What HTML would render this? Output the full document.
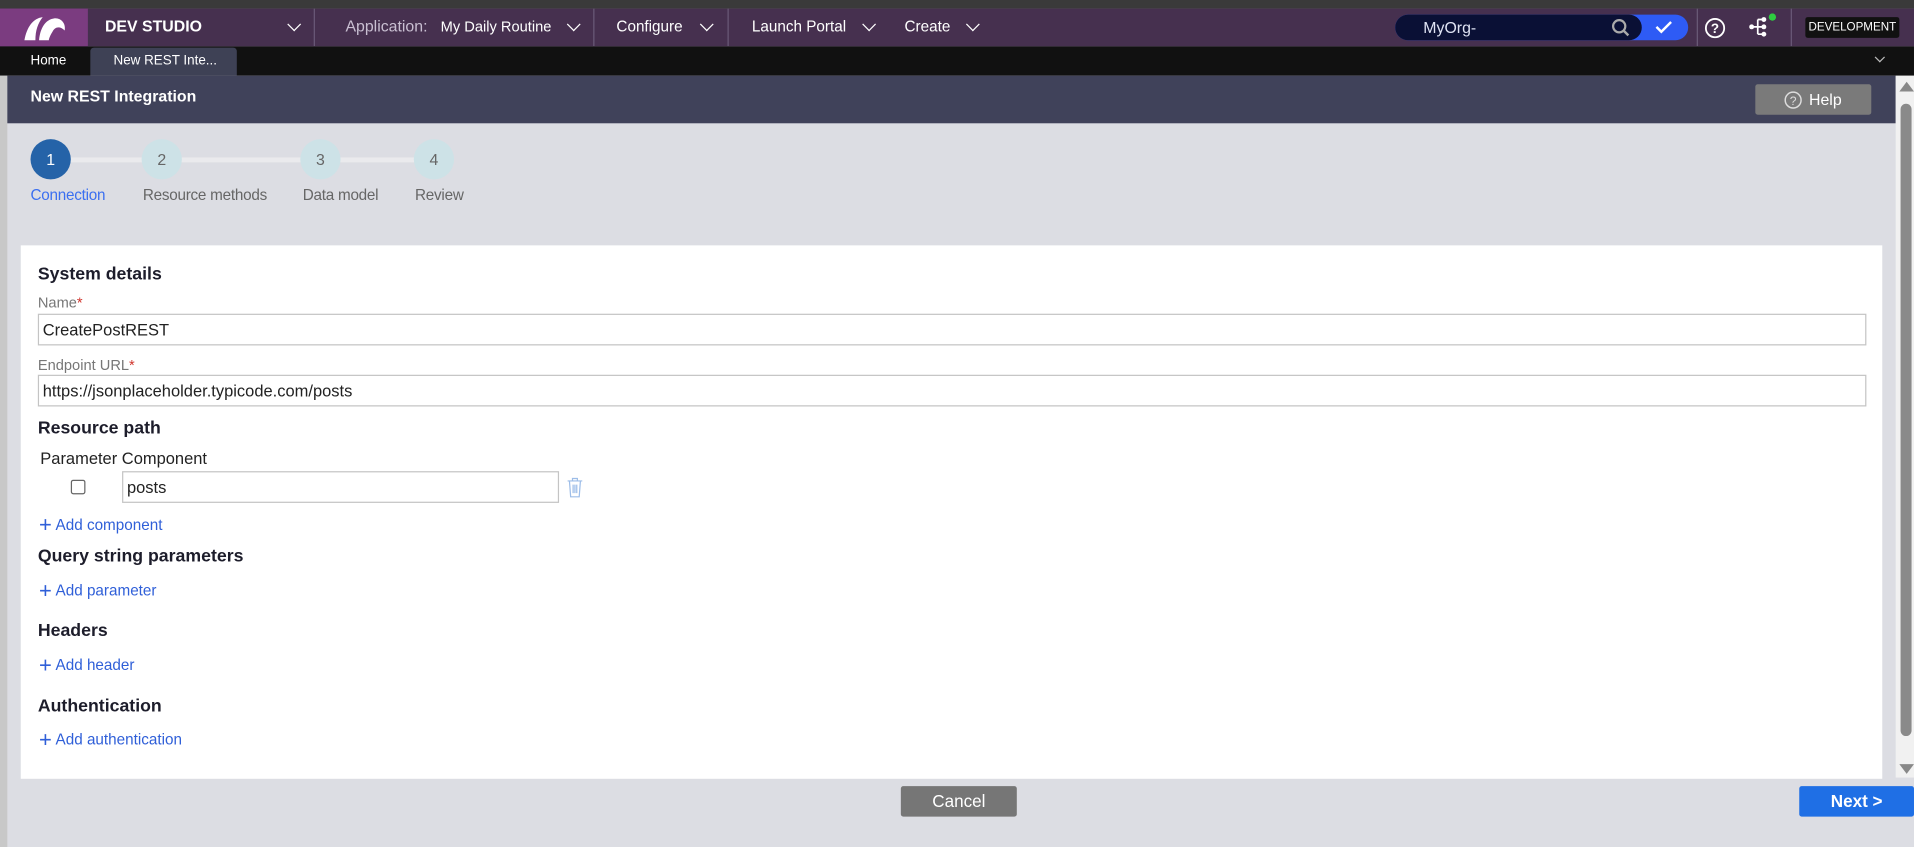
<!DOCTYPE html>
<html><head><meta charset="utf-8"><style>
*{box-sizing:border-box;margin:0;padding:0}
html,body{width:1914px;height:847px;overflow:hidden;background:#dcdde3;font-family:"Liberation Sans",sans-serif}
#w{position:absolute;left:0;top:0;width:1568px;height:694px;transform:scale(1.22066);transform-origin:0 0;background:#dcdde3}
.a{position:absolute;white-space:nowrap}
.chev{position:absolute;width:8px;height:8px;border-right:1.6px solid #fff;border-bottom:1.6px solid #fff;transform:rotate(45deg)}
.div{position:absolute;top:7px;height:31px;width:1px;background:#6a5a78}
.lbl{position:absolute;font-size:12px;color:#777}
.lbl b{color:#d0342c;font-weight:normal}
.inp{position:absolute;height:26px;border:1px solid #c4c4c4;background:#fff;font-size:13.5px;color:#222;padding:5px 0 0 3px}
.h{position:absolute;font-size:14.5px;color:#1d1d2b;font-weight:bold}
.add{position:absolute;font-size:12.5px;color:#2f5fd8}
.add:before{content:"+";font-size:18px;font-weight:300;margin-right:3px;position:relative;top:2px}
.st{position:absolute;width:33px;height:33px;border-radius:50%;background:#cde2e7;color:#666;font-size:13px;text-align:center;line-height:33px;top:114px}
.sl{position:absolute;font-size:12.5px;color:#666;top:153px;letter-spacing:-.2px}
</style></head><body><div id="w">
<div class="a" style="left:0;top:0;width:1568px;height:7px;background:#3a3a3a"></div>
<div class="a" style="left:0;top:7px;width:1568px;height:31px;background:#46304f"></div>
<div class="a" style="left:0;top:7px;width:72px;height:31px;background:#7b3c80"></div>
<svg class="a" style="left:18px;top:12px" width="38" height="22" viewBox="0 0 38 22"><path d="M2 21 C4 10 9 3 17 2 C13 7 11 13 11 21 Z M14 21 C15 11 19 4 27 3 C33 3 36 8 35 13 C31 9 27 10 25 14 C23 17 22 20 22 21 Z" fill="#fff"/></svg>
<div class="a" style="left:86px;top:14px;font-size:13px;font-weight:bold;color:#fff">DEV STUDIO</div>
<div class="chev" style="left:237px;top:16px"></div>
<div class="div" style="left:257px"></div>
<div class="a" style="left:283px;top:14px;font-size:13px;color:#c9bfd2">Application:</div>
<div class="a" style="left:361px;top:15px;font-size:12px;color:#fff">My Daily Routine</div>
<div class="chev" style="left:466px;top:16px"></div>
<div class="div" style="left:486px"></div>
<div class="a" style="left:505px;top:15px;font-size:12.5px;color:#fff">Configure</div>
<div class="chev" style="left:575px;top:16px"></div>
<div class="div" style="left:596px"></div>
<div class="a" style="left:616px;top:15px;font-size:12.5px;color:#fff">Launch Portal</div>
<div class="chev" style="left:708px;top:16px"></div>
<div class="a" style="left:741px;top:15px;font-size:12.5px;color:#fff">Create</div>
<div class="chev" style="left:793px;top:16px"></div>
<div class="a" style="left:1143px;top:12px;width:240px;height:21px;border-radius:11px;background:#2e5bf5"></div>
<div class="a" style="left:1143px;top:12px;width:202px;height:21px;border-radius:11px;background:#0a1035"></div>
<div class="a" style="left:1166px;top:15px;font-size:13px;color:#dfe3f3">MyOrg-</div>
<svg class="a" style="left:1320px;top:15px" width="16" height="16"><circle cx="6.5" cy="6.5" r="5" fill="none" stroke="#aaa" stroke-width="1.8"/><path d="M10 10 L14 14" stroke="#aaa" stroke-width="2"/></svg>
<svg class="a" style="left:1355px;top:15px" width="16" height="14"><path d="M2 7 L6 11 L14 3" fill="none" stroke="#fff" stroke-width="2"/></svg>
<div class="div" style="left:1390px"></div>
<svg class="a" style="left:1396px;top:14px" width="18" height="18"><circle cx="9" cy="9" r="7.5" fill="none" stroke="#fff" stroke-width="1.5"/><text x="9" y="13" font-size="11" font-weight="bold" fill="#fff" text-anchor="middle" font-family="Liberation Sans">?</text></svg>
<svg class="a" style="left:1432px;top:11px" width="24" height="22"><path d="M2 11 H8 M8 5 V17 M8 5 H12 M8 11 H12 M8 17 H12" stroke="#fff" stroke-width="1.4" fill="none"/><circle cx="3" cy="11" r="2" fill="#fff"/><circle cx="13" cy="5" r="2" fill="#fff"/><circle cx="13" cy="11" r="2" fill="#fff"/><circle cx="13" cy="17" r="2" fill="#fff"/><circle cx="20" cy="3" r="3" fill="#2ecc40"/></svg>
<div class="div" style="left:1467px"></div>
<div class="a" style="left:1479px;top:14px;width:77px;height:17px;background:#111;border-radius:2px;color:#fff;font-size:9.5px;text-align:center;line-height:17px">DEVELOPMENT</div>
<div class="a" style="left:0;top:38px;width:1568px;height:24px;background:#111"></div>
<div class="a" style="left:25px;top:44px;font-size:11px;color:#fff">Home</div>
<div class="a" style="left:74px;top:39px;width:120px;height:23px;background:#3e4155;border-radius:3px 3px 0 0"></div>
<div class="a" style="left:93px;top:44px;font-size:11px;color:#fff">New REST Inte...</div>
<div class="chev" style="left:1537px;top:44px;width:6px;height:6px;border-color:#bbb;border-width:1.3px"></div>
<div class="a" style="left:0;top:62px;width:6px;height:632px;background:#c8c8c8"></div>
<div class="a" style="left:6px;top:62px;width:1547px;height:39px;background:#40425a"></div>
<div class="a" style="left:25px;top:71px;font-size:13px;font-weight:bold;color:#fff">New REST Integration</div>
<div class="a" style="left:1438px;top:69px;width:95px;height:25px;background:#7a7a7a;border-radius:2px"></div>
<svg class="a" style="left:1461px;top:74px" width="16" height="16"><circle cx="8" cy="8" r="6.5" fill="none" stroke="#ddd" stroke-width="1.2"/><text x="8" y="12" font-size="10" fill="#ddd" text-anchor="middle" font-family="Liberation Sans">?</text></svg>
<div class="a" style="left:1482px;top:74px;font-size:13px;color:#fff">Help</div>
<div class="a" style="left:1553px;top:62px;width:15px;height:575px;background:#f1f1f1"></div>
<div class="a" style="left:1557px;top:85px;width:9px;height:518px;background:#8a8a8a;border-radius:5px"></div>
<div class="a" style="left:1556px;top:67px;width:0;height:0;border-left:6px solid transparent;border-right:6px solid transparent;border-bottom:8px solid #888"></div>
<div class="a" style="left:1556px;top:626px;width:0;height:0;border-left:6px solid transparent;border-right:6px solid transparent;border-top:8px solid #888"></div>
<div class="a" style="left:58px;top:129px;width:300px;height:4px;background:#eaeaed"></div>
<div class="st" style="left:25px;background:#2563a8;color:#fff">1</div>
<div class="st" style="left:116px">2</div>
<div class="st" style="left:246px">3</div>
<div class="st" style="left:339px">4</div>
<div class="sl" style="left:25px;color:#3b6ff0">Connection</div>
<div class="sl" style="left:117px">Resource methods</div>
<div class="sl" style="left:248px">Data model</div>
<div class="sl" style="left:340px">Review</div>
<div class="a" style="left:17px;top:201px;width:1525px;height:437px;background:#fff"></div>
<div class="h" style="left:31px;top:217px">System details</div>
<div class="lbl" style="left:31px;top:241px">Name<b>*</b></div>
<div class="inp" style="left:31px;top:257px;width:1498px">CreatePostREST</div>
<div class="lbl" style="left:31px;top:292px">Endpoint URL<b>*</b></div>
<div class="inp" style="left:31px;top:307px;width:1498px">https://jsonplaceholder.typicode.com/posts</div>
<div class="h" style="left:31px;top:343px">Resource path</div>
<div class="a" style="left:33px;top:368px;font-size:13.5px;color:#222">Parameter Component</div>
<div class="a" style="left:58px;top:393px;width:12px;height:12px;border:1px solid #666;border-radius:2px"></div>
<div class="inp" style="left:100px;top:386px;width:358px">posts</div>
<svg class="a" style="left:464px;top:391px" width="14" height="18"><path d="M1 3 H13 M5 3 V1 H9 V3 M2.5 3 L3.5 16 H10.5 L11.5 3 M5.5 6 V13 M7 6 V13 M8.5 6 V13" fill="none" stroke="#9dbde8" stroke-width="1"/></svg>
<div class="add" style="left:32px;top:418px">Add component</div>
<div class="h" style="left:31px;top:448px">Query string parameters</div>
<div class="add" style="left:32px;top:472px">Add parameter</div>
<div class="h" style="left:31px;top:509px">Headers</div>
<div class="add" style="left:32px;top:533px">Add header</div>
<div class="h" style="left:31px;top:571px">Authentication</div>
<div class="add" style="left:32px;top:594px">Add authentication</div>
<div class="a" style="left:738px;top:644px;width:95px;height:25px;background:#767676;border-radius:2px;color:#fff;font-size:14px;text-align:center;line-height:25px">Cancel</div>
<div class="a" style="left:1474px;top:644px;width:94px;height:25px;background:#1f6fe5;border-radius:2px;color:#fff;font-size:14px;font-weight:bold;text-align:center;line-height:25px">Next &gt;</div>
</div></body></html>
